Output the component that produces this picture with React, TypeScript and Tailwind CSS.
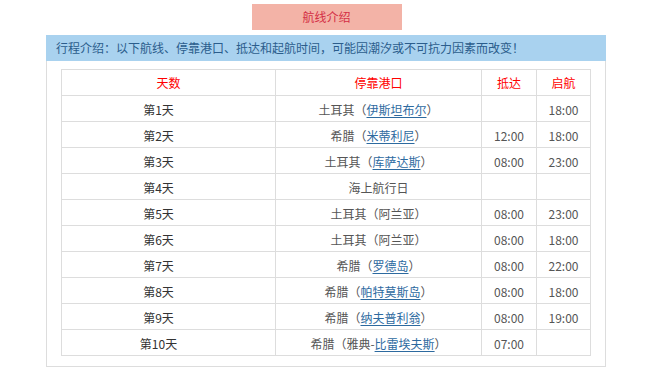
const rows: { day: string; country: string; pre?: string; port?: string; note?: string; arrive: string; depart: string }[] = [
  { day: "第1天", country: "土耳其", port: "伊斯坦布尔", arrive: "", depart: "18:00" },
  { day: "第2天", country: "希腊", port: "米蒂利尼", arrive: "12:00", depart: "18:00" },
  { day: "第3天", country: "土耳其", port: "库萨达斯", arrive: "08:00", depart: "23:00" },
  { day: "第4天", country: "", note: "海上航行日", arrive: "", depart: "" },
  { day: "第5天", country: "土耳其", pre: "阿兰亚", arrive: "08:00", depart: "23:00" },
  { day: "第6天", country: "土耳其", pre: "阿兰亚", arrive: "08:00", depart: "18:00" },
  { day: "第7天", country: "希腊", port: "罗德岛", arrive: "08:00", depart: "22:00" },
  { day: "第8天", country: "希腊", port: "帕特莫斯岛", arrive: "08:00", depart: "18:00" },
  { day: "第9天", country: "希腊", port: "纳夫普利翁", arrive: "08:00", depart: "19:00" },
  { day: "第10天", country: "希腊", pre: "雅典-", port: "比雷埃夫斯", arrive: "07:00", depart: "" },
];

export default function App() {
  return (
    <div
      className="w-[653px] h-[390px] bg-white text-[12px] leading-none"
      style={{ fontFamily: '"Noto Sans CJK SC", "Liberation Sans", sans-serif' }}
    >
      <div className="pt-[4px]">
        <div className="mx-auto w-[150px] h-[26px] bg-[#f3b3a7] text-[#d42f45] flex items-center justify-center">
          航线介绍
        </div>
      </div>

      <div className="ml-[46px] mt-[5px] w-[560px]">
        <div className="h-[26px] bg-[#a9d2ef] text-[#2b5d8c] flex items-center pl-[10px]">
          行程介绍：以下航线、停靠港口、抵达和起航时间，可能因潮汐或不可抗力因素而改变！
        </div>
        <div className="border-x border-b border-[#dddddd] pt-[8px] pb-[10px] pl-[14px] pr-[15px]">
          <table className="w-[529px] table-fixed border-collapse">
            <colgroup>
              <col className="w-[214px]" />
              <col className="w-[206px]" />
              <col className="w-[55px]" />
              <col className="w-[54px]" />
            </colgroup>
            <thead>
              <tr className="h-[26px]">
                {["天数", "停靠港口", "抵达", "启航"].map((h) => (
                  <th key={h} className="border border-[#dddddd] text-[#ff0000] font-normal text-center p-0">
                    {h}
                  </th>
                ))}
              </tr>
            </thead>
            <tbody>
              {rows.map((r) => (
                <tr key={r.day} className="h-[26px]">
                  <td className="border border-[#dddddd] text-center text-[#333333] p-0 pr-[20px] pt-[2px]">{r.day}</td>
                  <td className="border border-[#dddddd] text-center text-[#555555] p-0 pt-[2px]">
                    {r.note ? (
                      r.note
                    ) : (
                      <>
                        {r.country}（{r.pre}
                        {r.port && <span className="text-[#2d6a9f] underline underline-offset-2">{r.port}</span>}）
                      </>
                    )}
                  </td>
                  <td className="border border-[#dddddd] text-center text-[#555555] p-0 pt-[2px]">{r.arrive}</td>
                  <td className="border border-[#dddddd] text-center text-[#555555] p-0 pt-[2px]">{r.depart}</td>
                </tr>
              ))}
            </tbody>
          </table>
        </div>
      </div>
    </div>
  );
}
